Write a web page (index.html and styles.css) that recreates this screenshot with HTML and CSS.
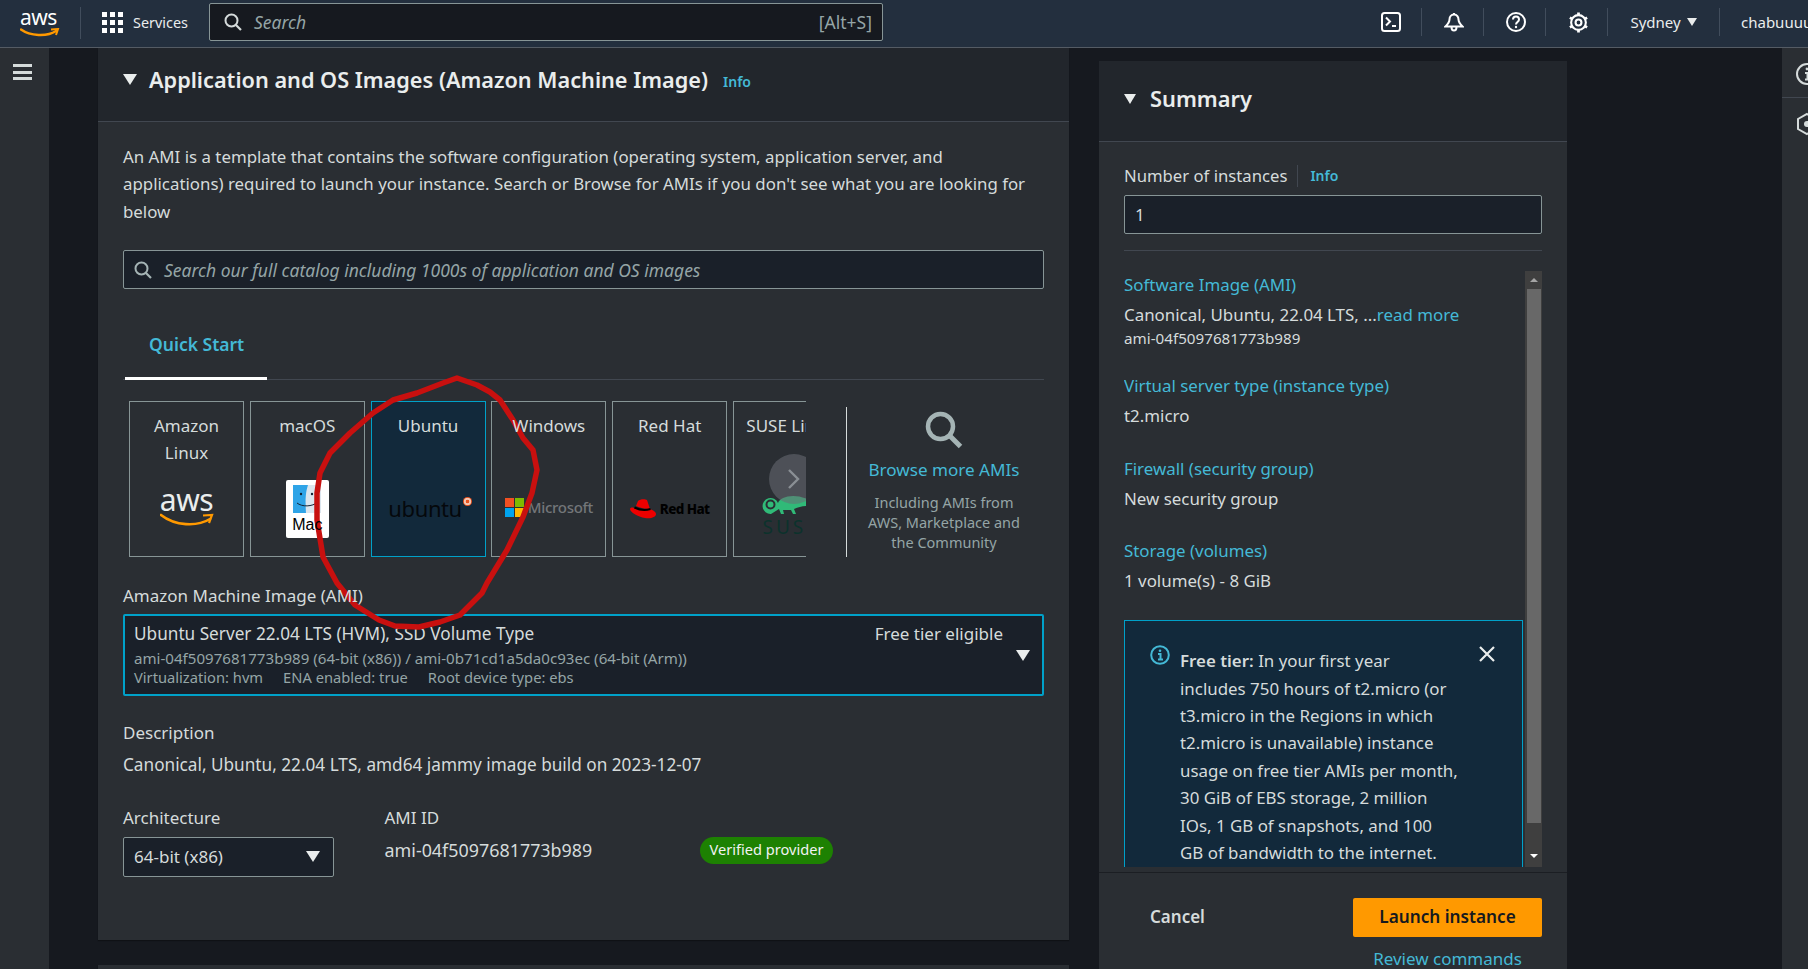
FILE: index.html
```html
<!DOCTYPE html>
<html lang="en">
<head>
    <meta charset="UTF-8">
    <title>Launch an instance</title>
    <link rel="stylesheet" href="styles.css">
</head>
<body>
    <header class="topbar">
        <div class="aws-logo">
            <span class="aws-word">aws</span>
            <svg class="aws-smile" viewBox="0 0 40 10"><path d="M1 1.500C10 8 27 9 36 3" fill="none" stroke="#f90" stroke-width="2.400" stroke-linecap="round"/><path d="M31 1.500l7-.5-2 6" fill="none" stroke="#f90" stroke-width="2"/></svg>
        </div>
        <div class="services">
            <span class="grid-icon"><i></i><i></i><i></i><i></i><i></i><i></i><i></i><i></i><i></i></span>
            <span>Services</span>
        </div>
        <div class="top-search">
            <svg class="search-icon" viewBox="0 0 18 18"><circle cx="7.500" cy="7.500" r="6" fill="none" stroke="#d5dbdb" stroke-width="2"/><path d="M12 12l5 5" stroke="#d5dbdb" stroke-width="2.200"/></svg>
            <span class="top-search-text">Search</span>
            <span class="shortcut">[Alt+S]</span>
        </div>
        <nav class="top-actions">
            <div class="top-cell">
                <svg width="20" height="20" viewBox="0 0 20 20"><rect x="1" y="1" width="18" height="18" rx="2.500" fill="none" stroke="#fff" stroke-width="2"/><path d="M5 5.500l4 4-4 4M11 14h4" fill="none" stroke="#fff" stroke-width="2"/></svg>
            </div>
            <div class="top-cell">
                <svg width="20" height="20" viewBox="0 0 20 20"><path d="M10 2.500c-3 0-4.500 2.400-4.500 5 0 3-1.500 4.500-4 7h17c-2.500-2.500-4-4-4-7 0-2.600-1.500-5-4.500-5zM10 1v2M7.500 15c0 2 1 3.500 2.500 3.500s2.500-1.500 2.500-3.500" fill="none" stroke="#fff" stroke-width="2"/></svg>
            </div>
            <div class="top-cell">
                <svg width="20" height="20" viewBox="0 0 20 20"><circle cx="10" cy="10" r="9" fill="none" stroke="#fff" stroke-width="2"/><path d="M7 7.500c0-4 6-4 6 0 0 2.500-3 2.500-3 5" fill="none" stroke="#fff" stroke-width="2"/><circle cx="10" cy="15" r="1.200" fill="#fff"/></svg>
            </div>
            <div class="top-cell gear-cell">
                <svg width="21" height="21" viewBox="0 0 20 20"><circle cx="10" cy="10" r="2.800" fill="none" stroke="#fff" stroke-width="2"/><circle cx="10" cy="10" r="7" fill="none" stroke="#fff" stroke-width="2"/><path d="M10 0.500v3M10 16.500v3M1.800 5.300l2.600 1.500M15.600 13.200l2.600 1.500M1.800 14.700l2.600-1.500M15.600 6.800l2.600-1.500" stroke="#fff" stroke-width="2.600"/></svg>
            </div>
            <div class="top-cell region">Sydney <span class="caret caret-small"></span></div>
            <div class="top-cell account">chabuuuu</div>
        </nav>
    </header>

    <div class="page">
        <aside class="left-rail">
            <span class="hamburger"><i></i><i></i><i></i></span>
        </aside>

        <main class="main-col">
            <section class="panel ami-panel">
                <div class="panel-head">
                    <span class="caret"></span>
                    <h2>Application and OS Images (Amazon Machine Image)</h2>
                    <a class="info-link">Info</a>
                </div>
                <div class="panel-body">
                    <p class="intro">An AMI is a template that contains the software configuration (operating system, application server, and applications) required to launch your instance. Search or Browse for AMIs if you don't see what you are looking for below</p>

                    <div class="ami-search">
                        <svg class="search-icon" viewBox="0 0 18 18"><circle cx="7.500" cy="7.500" r="6" fill="none" stroke="#a5b4b5" stroke-width="2"/><path d="M12 12l5 5" stroke="#a5b4b5" stroke-width="2.200"/></svg>
                        <span>Search our full catalog including 1000s of application and OS images</span>
                    </div>

                    <div class="tabs">
                        <a class="tab">Quick Start</a>
                    </div>

                    <div class="picker">
                        <div class="carousel">
                            <div class="tile">
                                <div class="tile-name">Amazon Linux</div>
                                <div class="tile-logo">
                                    <div class="logo-aws">
                                        <span>aws</span>
                                        <svg viewBox="0 0 54 14" width="54" height="14"><path d="M1 2c14 11 36 12 49 4" fill="none" stroke="#f90" stroke-width="2.600" stroke-linecap="round"/><path d="M43 2.500l9-.5-3 8" fill="none" stroke="#f90" stroke-width="2.200"/></svg>
                                    </div>
                                </div>
                            </div>
                            <div class="tile">
                                <div class="tile-name">macOS</div>
                                <div class="tile-logo">
                                    <div class="logo-mac">
                                        <svg width="28" height="28" viewBox="0 0 28 28"><rect width="28" height="28" fill="#dce6ee"/><path d="M0 0h15c-2 6-3 13-2 28H0z" fill="#2fa4e7"/><circle cx="8" cy="9" r="1.200" fill="#123"/><circle cx="19" cy="9" r="1.200" fill="#123"/><path d="M4 18c5 4 15 4 21-1" fill="none" stroke="#123" stroke-width="1"/></svg>
                                        <span class="over-marker">Mac</span>
                                    </div>
                                </div>
                            </div>
                            <div class="tile tile-selected">
                                <div class="tile-name">Ubuntu</div>
                                <div class="tile-logo">
                                    <div class="logo-ubuntu">
                                        <span>ubuntu</span><i></i>
                                    </div>
                                </div>
                            </div>
                            <div class="tile">
                                <div class="tile-name"><span class="over-marker">Windows</span></div>
                                <div class="tile-logo">
                                    <div class="logo-ms">
                                        <span class="ms-squares"><i></i><i></i><i></i><i></i></span>
                                        <span>Microsoft</span>
                                    </div>
                                </div>
                            </div>
                            <div class="tile">
                                <div class="tile-name">Red Hat</div>
                                <div class="tile-logo">
                                    <div class="logo-redhat">
                                        <svg width="26" height="20" viewBox="0 0 26 20"><path d="M8 2c2-2 7-2 9-1l3 9c3 1 6 3 6 5 0 3-5 5-11 4C8 18 0 13 0 10c0-1 2-2 4-1 5 2 11 3 16 1-5 0-10-1-14-3z" fill="#e00"/><path d="M4.500 8.500c5 2.500 11 3 16 1.500" fill="none" stroke="#000" stroke-width="2"/></svg>
                                        <span>Red Hat</span>
                                    </div>
                                </div>
                            </div>
                            <div class="tile tile-clipped">
                                <div class="tile-name">SUSE Linux</div>
                                <div class="tile-logo">
                                    <div class="logo-suse">
                                        <svg width="76" height="23" viewBox="0 0 76 23"><path d="M9 21a8 8 0 1 1 7-11c2-6 15-10 29-4l4 4-3 3c-6 0-9 1-14 3l2 5h-3l-2-4-8 0 1 4h-3l-2-5" fill="#30ba78"/><circle cx="8.500" cy="11.500" r="4" fill="none" stroke="#2a2e33" stroke-width="2"/></svg>
                                        <span>SUSE</span>
                                    </div>
                                </div>
                            </div>
                            <button class="carousel-next" type="button">
                                <svg width="14" height="22" viewBox="0 0 14 22"><path d="M2 2l9 9-9 9" fill="none" stroke="#8a8f94" stroke-width="2.400"/></svg>
                            </button>
                        </div>
                        <div class="browse">
                            <svg width="38" height="38" viewBox="0 0 38 38"><circle cx="15.500" cy="15.500" r="12.500" fill="none" stroke="#a5b4b5" stroke-width="4.500"/><path d="M24.500 24.500l11 11" stroke="#a5b4b5" stroke-width="5"/></svg>
                            <a class="browse-link">Browse more AMIs</a>
                            <p>Including AMIs from AWS, Marketplace and the Community</p>
                        </div>
                    </div>

                    <div class="field-label ami-label"><span class="over-marker">Amazon Machine Image (AMI)</span></div>
                    <div class="ami-select">
                        <div class="ami-select-top">
                            <span>Ubuntu Server 22.04 LTS (HVM), SSD Volume Type</span>
                            <span class="free-tier">Free tier eligible</span>
                        </div>
                        <div class="ami-meta">ami-04f5097681773b989 (64-bit (x86)) / ami-0b71cd1a5da0c93ec (64-bit (Arm))</div>
                        <div class="ami-meta ami-tags">
                            <span>Virtualization: hvm</span>
                            <span>ENA enabled: true</span>
                            <span>Root device type: ebs</span>
                        </div>
                        <span class="caret select-caret"></span>
                    </div>

                    <div class="field-label desc-label">Description</div>
                    <div class="desc-value">Canonical, Ubuntu, 22.04 LTS, amd64 jammy image build on 2023-12-07</div>

                    <div class="arch-row">
                        <div class="arch-col">
                            <div class="field-label">Architecture</div>
                            <div class="arch-select">64-bit (x86) <span class="caret"></span></div>
                        </div>
                        <div class="id-col">
                            <div class="field-label">AMI ID</div>
                            <div class="id-value">ami-04f5097681773b989</div>
                        </div>
                        <span class="badge">Verified provider</span>
                    </div>
                </div>
            </section>
            <section class="panel next-panel"></section>
        </main>

        <aside class="summary">
            <div class="summary-head">
                <span class="caret"></span>
                <h2>Summary</h2>
            </div>
            <div class="summary-body">
                <div class="count-label">
                    <span>Number of instances</span>
                    <a class="info-link">Info</a>
                </div>
                <div class="count-input">1</div>
                <div class="summary-scroll">
                    <div class="summary-list">
                        <a class="sum-link">Software Image (AMI)</a>
                        <div class="sum-value">Canonical, Ubuntu, 22.04 LTS, ...<a class="read-more">read more</a></div>
                        <div class="sum-small">ami-04f5097681773b989</div>
                        <a class="sum-link">Virtual server type (instance type)</a>
                        <div class="sum-value">t2.micro</div>
                        <a class="sum-link">Firewall (security group)</a>
                        <div class="sum-value">New security group</div>
                        <a class="sum-link">Storage (volumes)</a>
                        <div class="sum-value">1 volume(s) - 8 GiB</div>
                        <div class="free-alert">
                            <svg class="alert-icon" width="20" height="20" viewBox="0 0 20 20"><circle cx="10" cy="10" r="8.800" fill="none" stroke="#44b9d6" stroke-width="2"/><path d="M8 9h2.500v5M8 14.500h5" fill="none" stroke="#44b9d6" stroke-width="2"/><circle cx="10" cy="5.800" r="1.300" fill="#44b9d6"/></svg>
                            <p><b>Free tier:</b> In your first year includes 750 hours of t2.micro (or t3.micro in the Regions in which t2.micro is unavailable) instance usage on free tier AMIs per month, 30 GiB of EBS storage, 2 million IOs, 1 GB of snapshots, and 100 GB of bandwidth to the internet.</p>
                            <svg class="alert-close" width="18" height="18" viewBox="0 0 18 18"><path d="M2 2l14 14M16 2L2 16" stroke="#eaeded" stroke-width="2.200"/></svg>
                        </div>
                    </div>
                    <div class="scrollbar">
                        <span class="arrow-up"></span>
                        <span class="thumb"></span>
                        <span class="arrow-down"></span>
                    </div>
                </div>
            </div>
            <div class="summary-foot">
                <div class="foot-buttons">
                    <a class="cancel">Cancel</a>
                    <button class="launch" type="button">Launch instance</button>
                </div>
                <a class="review">Review commands</a>
            </div>
        </aside>

        <aside class="right-rail">
            <div class="rail-cell">
                <svg width="24" height="24" viewBox="0 0 24 24"><circle cx="12" cy="12" r="10" fill="none" stroke="#d5dbdb" stroke-width="2"/><path d="M10 11h2.500v6M10 17.500h5" fill="none" stroke="#d5dbdb" stroke-width="2"/><circle cx="12" cy="7" r="1.400" fill="#d5dbdb"/></svg>
            </div>
            <div class="rail-cell">
                <svg width="24" height="24" viewBox="0 0 24 24"><path d="M12 2l9 5v10l-9 5-9-5V7z" fill="none" stroke="#d5dbdb" stroke-width="2"/><circle cx="12" cy="12" r="3" fill="#d5dbdb"/></svg>
            </div>
        </aside>
    </div>

    <!-- hand drawn marker ring around the Ubuntu tile -->
    <svg class="marker" width="1808" height="969" viewBox="0 0 1808 969">
        <path d="M457 378L477 385 490 392 500 400 513 420 523 438 533 450 537 470 532 493 523 517 507 550 487 583 482 593 460 615 440 622 419 627 395 626 379 620 355 605 337 583 323 557 317 520 317 493 320 473 330 453 350 433 373 413 393 400 417 393 443 383Z" fill="none" stroke="#c8100f" stroke-width="5.500" stroke-linejoin="round"/>
    </svg>
</body>
</html>
```

FILE: styles.css
```css
* {
    margin: 0;
    padding: 0;
    box-sizing: border-box;
}

html, body {
    height: 100%;
    overflow: hidden;
}

body {
    background: #16191f;
    color: #d5dbdb;
    font-family: "Noto Sans", "Open Sans", sans-serif;
    font-size: 17px;
}

i {
    display: block;
}

.caret {
    display: inline-block;
    width: 0;
    height: 0;
    border-left: 7px solid transparent;
    border-right: 7px solid transparent;
    border-top: 11px solid #eaeded;
}

.caret-small {
    border-left-width: 5px;
    border-right-width: 5px;
    border-top-width: 8px;
    margin-left: 6px;
}

/* text that the marker ring passes behind */
.over-marker {
    position: relative;
    z-index: 1;
}

/* top bar */
.topbar {
    height: 48px;
    background: #232f3e;
    border-bottom: 1px solid #545b64;
    display: flex;
    align-items: center;
    overflow: hidden;
    color: #eaeded;
}

.aws-logo {
    width: 81px;
    height: 32px;
    padding-left: 20px;
    border-right: 1px solid #414d5c;
    margin-top: -2px;
}

.aws-word {
    display: block;
    font-size: 21px;
    line-height: 20px;
    color: #fff;
    letter-spacing: -0.5px;
}

.aws-smile {
    display: block;
    width: 40px;
    height: 10px;
    margin-top: 1px;
}

.services {
    display: flex;
    align-items: center;
    gap: 10px;
    margin-left: 21px;
    margin-top: -3px;
    font-size: 14.4px;
    color: #eaeded;
}

.grid-icon {
    display: grid;
    grid-template-columns: repeat(3, 5px);
    grid-auto-rows: 5px;
    gap: 3px;
}

.grid-icon i {
    background: #fff;
}

.top-search {
    width: 674px;
    height: 38px;
    margin-left: 21px;
    margin-top: -3px;
    background: #16191f;
    border: 1px solid #879596;
    border-radius: 2px;
    display: flex;
    align-items: center;
    padding: 0 10px 0 14px;
    font-size: 17.5px;
}

.search-icon {
    width: 18px;
    height: 18px;
    flex-shrink: 0;
}

.top-search-text {
    margin-left: 12px;
    font-style: italic;
    color: #95a5a6;
}

.shortcut {
    margin-left: auto;
    color: #95a5a6;
}

.top-actions {
    margin-left: auto;
    margin-top: -3px;
    width: 448px;
    display: flex;
    flex-shrink: 0;
    overflow: hidden;
}

.top-cell {
    width: 62px;
    height: 28px;
    display: flex;
    align-items: center;
    justify-content: center;
    border-right: 1px solid #414d5c;
    flex-shrink: 0;
    font-size: 15px;
}

.top-cell + .top-cell {
    padding-left: 2px;
}

.top-cell.gear-cell {
    padding-left: 4px;
}

.top-cell.region {
    width: 112px;
    padding-left: 0;
}

.top-cell.account {
    width: 88px;
    border-right: none;
    justify-content: flex-start;
    padding-left: 21px;
    white-space: nowrap;
}

/* page columns */
.page {
    display: flex;
    height: 921px;
    overflow: hidden;
}

.left-rail {
    width: 49px;
    background: #2a2e33;
    flex-shrink: 0;
    padding: 16px 0 0 13px;
}

.hamburger {
    display: flex;
    flex-direction: column;
    gap: 3.5px;
    width: 19px;
}

.hamburger i {
    height: 3px;
    background: #d5dbdb;
}

.main-col {
    width: 971px;
    margin-left: 49px;
    flex-shrink: 0;
}

.panel {
    background: #2a2e33;
    box-shadow: 0 1px 1px rgba(0, 0, 0, 0.3);
}

.panel-head {
    height: 74px;
    background: #22262c;
    border-bottom: 1px solid #414750;
    display: flex;
    align-items: center;
    padding: 0 0 10px 25px;
}

.panel-head h2 {
    font-size: 21.7px;
    font-weight: 600;
    color: #eaeded;
    margin-left: 12px;
}

.info-link {
    color: #44b9d6;
    font-size: 14px;
    font-weight: 600;
}

.panel-head .info-link {
    margin-left: 15px;
    margin-top: 4px;
}

.panel-body {
    height: 818px;
    padding: 21px 25px 0;
}

.intro {
    font-size: 16.85px;
    line-height: 27.4px;
    height: 82px;
}

.ami-search {
    height: 39px;
    margin-top: 25px;
    background: #1a2029;
    border: 1px solid #879596;
    border-radius: 2px;
    display: flex;
    align-items: center;
    padding-left: 10px;
    font-size: 17.5px;
    font-style: italic;
    color: #95a5a6;
}

.ami-search span {
    margin-left: 12px;
}

.tabs {
    height: 91px;
    border-bottom: 1px solid #414750;
    display: flex;
    align-items: flex-end;
}

.tab {
    width: 142px;
    height: 62px;
    margin-left: 2px;
    margin-bottom: -1px;
    border-bottom: 3px solid #fff;
    color: #44b9d6;
    font-size: 17.5px;
    font-weight: 600;
    padding: 15px 0 0 24px;
    line-height: 22px;
}

/* ami tiles */
.picker {
    display: flex;
    margin: 21px 0 0 6px;
    gap: 40px;
}

.carousel {
    width: 677px;
    display: flex;
    gap: 5.8px;
    overflow: hidden;
    position: relative;
}

.tile {
    width: 115px;
    height: 156px;
    flex-shrink: 0;
    border: 1px solid #879596;
    display: flex;
    flex-direction: column;
    padding-top: 10px;
}

.tile-selected {
    background: #12293b;
    border-color: #00a1c9;
}

.tile-name {
    height: 55px;
    padding: 0 12px;
    line-height: 27px;
    text-align: center;
}

.tile-clipped .tile-name {
    padding: 0;
    white-space: nowrap;
}

.tile-logo {
    flex: 1;
    display: flex;
    align-items: center;
    justify-content: center;
    padding-bottom: 6px;
}

.carousel-next {
    position: absolute;
    left: 640px;
    top: 53px;
    width: 50px;
    height: 50px;
    border: none;
    border-radius: 50%;
    background: rgba(105, 110, 116, 0.55);
    display: flex;
    align-items: center;
    justify-content: center;
}

.logo-aws {
    display: flex;
    flex-direction: column;
    align-items: center;
    color: #eaeded;
    margin-top: -3px;
}

.logo-aws span {
    font-size: 30px;
    line-height: 26px;
    letter-spacing: -0.5px;
}

.logo-mac {
    width: 43px;
    height: 58px;
    background: #fff;
    border-radius: 2px;
    display: flex;
    flex-direction: column;
    align-items: center;
    padding-top: 5px;
    color: #000;
    font-family: "Liberation Sans", sans-serif;
    font-size: 16px;
    line-height: 20px;
}

.logo-mac span {
    margin-top: 2px;
}

.logo-ubuntu {
    display: flex;
    color: #05080c;
    font-size: 22px;
    line-height: 26px;
    letter-spacing: -0.4px;
    margin: -2px 0 0 4px;
}

.logo-ubuntu i {
    width: 9px;
    height: 9px;
    margin: 2px 0 0 1px;
    border-radius: 50%;
    background: radial-gradient(circle, #e95420 28%, #f6c6b0 32%, #f6c6b0 55%, #e95420 60%);
}

.logo-ms {
    display: flex;
    align-items: center;
    gap: 4px;
    margin-top: -3px;
    color: #737679;
    font-size: 15px;
    font-weight: 500;
    letter-spacing: -0.3px;
}

.ms-squares {
    display: grid;
    grid-template-columns: 9px 9px;
    grid-auto-rows: 9px;
    gap: 1px;
}

.ms-squares i:nth-child(1) { background: #f25022; }
.ms-squares i:nth-child(2) { background: #7fba00; }
.ms-squares i:nth-child(3) { background: #00a4ef; }
.ms-squares i:nth-child(4) { background: #ffb900; }

.logo-redhat {
    display: flex;
    align-items: center;
    gap: 4px;
    color: #000;
    font-size: 13.5px;
    font-weight: 800;
    letter-spacing: -0.6px;
    white-space: nowrap;
}

.logo-suse {
    width: 82px;
    padding-left: 2px;
    margin: 13px 0 0 22px;
    color: #0c322c;
    font-size: 19px;
    letter-spacing: 3px;
    line-height: 22px;
}

.logo-suse svg {
    display: block;
}

.browse {
    width: 198px;
    height: 150px;
    margin-top: 6px;
    border-left: 1px solid #d5dbdb;
    display: flex;
    flex-direction: column;
    align-items: center;
    text-align: center;
    padding: 4px 3px 0 0;
}

.browse-link {
    color: #44b9d6;
    font-size: 17.1px;
    margin-top: 9px;
    line-height: 24px;
}

.browse p {
    margin-top: 10px;
    font-size: 14.5px;
    line-height: 20px;
    color: #95a5a6;
    width: 164px;
}

/* fields */
.field-label {
    line-height: 20px;
}

.ami-label {
    margin-top: 29px;
}

.ami-select {
    position: relative;
    height: 82px;
    margin-top: 8px;
    background: #1a2029;
    border: 2px solid #00a1c9;
    border-radius: 2px;
    padding: 7px 39px 0 9px;
    font-size: 17.2px;
}

.ami-select-top {
    display: flex;
    justify-content: space-between;
    line-height: 22px;
}

.free-tier {
    font-size: 17px;
}

.ami-meta {
    font-size: 15.1px;
    line-height: 20px;
    color: #95a5a6;
}

.ami-select-top + .ami-meta {
    margin-top: 3px;
}

.ami-tags {
    display: flex;
    gap: 20px;
    margin-top: -1px;
    font-size: 14.7px;
}

.select-caret {
    position: absolute;
    right: 12px;
    top: 34px;
}

.desc-label {
    margin-top: 27px;
}

.desc-value {
    margin-top: 11px;
    font-size: 17.2px;
    line-height: 22px;
}

.arch-row {
    display: flex;
    margin-top: 32px;
}

.arch-col {
    width: 261.5px;
}

.arch-select {
    width: 211px;
    height: 40px;
    margin-top: 9px;
    background: #1a2029;
    border: 1px solid #879596;
    border-radius: 2px;
    display: flex;
    align-items: center;
    justify-content: space-between;
    padding: 0 13px 2px 10px;
}

.id-col {
    width: 315.5px;
}

.id-value {
    margin-top: 11px;
    font-size: 17.9px;
    line-height: 22px;
}

.badge {
    align-self: flex-start;
    margin-top: 29px;
    width: 133px;
    height: 27px;
    border-radius: 14px;
    background: #1d8102;
    color: #f2f3f3;
    font-size: 14.6px;
    line-height: 25px;
    text-align: center;
}

.next-panel {
    height: 60px;
    margin-top: 25px;
}

/* summary */
.summary {
    width: 468px;
    height: 908px;
    margin: 13px 0 0 30px;
    flex-shrink: 0;
    background: #2a2e33;
    overflow: hidden;
}

.summary-head {
    height: 81px;
    background: #22262c;
    border-bottom: 1px solid #414750;
    display: flex;
    align-items: center;
    padding: 0 0 5px 25px;
}

.summary-head .caret {
    border-left-width: 6px;
    border-right-width: 6px;
    border-top-width: 10px;
}

.summary-head h2 {
    margin-left: 14px;
    font-size: 21.8px;
    font-weight: 600;
    color: #eaeded;
}

.summary-body {
    padding: 23px 25px 5px;
    font-size: 16.9px;
}

.count-label {
    display: flex;
    align-items: center;
    line-height: 22px;
    font-size: 16.7px;
}

.count-label .info-link {
    margin-left: 10px;
    padding-left: 12px;
    border-left: 1px solid #414750;
    font-size: 14px;
}

.count-input {
    height: 39px;
    margin-top: 8px;
    background: #1a2029;
    border: 1px solid #879596;
    border-radius: 2px;
    padding-left: 10px;
    line-height: 37px;
}

.summary-scroll {
    height: 617px;
    margin-top: 16px;
    padding-top: 20px;
    border-top: 1px solid #414750;
    display: flex;
}

.summary-list {
    width: 399px;
    overflow: hidden;
}

.sum-link {
    display: block;
    color: #44b9d6;
    line-height: 22px;
    margin-top: 30.6px;
}

.sum-link:first-child {
    margin-top: 3px;
}

.sum-value {
    margin-top: 8px;
    line-height: 22px;
}

.read-more {
    color: #44b9d6;
}

.sum-small {
    font-size: 15.2px;
    line-height: 20px;
    margin-top: 2px;
    margin-bottom: -3.6px;
}

.free-alert {
    position: relative;
    margin-top: 28px;
    height: 300px;
    background: #12293b;
    border: 1px solid #00a1c9;
    padding: 26px 64px 0 55px;
}

.free-alert p {
    line-height: 27.4px;
}

.free-alert b {
    font-weight: 600;
}

.alert-icon {
    position: absolute;
    left: 25px;
    top: 24px;
}

.alert-close {
    position: absolute;
    left: 353px;
    top: 24px;
}

.scrollbar {
    width: 17px;
    height: 596px;
    margin-left: 2px;
    background: #3f3f3f;
    display: flex;
    flex-direction: column;
    align-items: center;
}

.arrow-up, .arrow-down {
    flex-shrink: 0;
    width: 0;
    height: 0;
    border-left: 4px solid transparent;
    border-right: 4px solid transparent;
}

.arrow-up {
    margin-top: 7px;
    border-bottom: 4px solid #a5a5a5;
}

.arrow-down {
    margin-top: 31px;
    border-top: 4px solid #fff;
}

.thumb {
    width: 14px;
    height: 534px;
    margin-top: 7px;
    background: #686868;
}

.summary-foot {
    border-top: 1px solid #1b1e23;
    padding: 25px 25px 0 51px;
}

.foot-buttons {
    display: flex;
    align-items: center;
    justify-content: space-between;
}

.cancel {
    font-weight: 600;
    margin-top: -3px;
}

.launch {
    width: 189px;
    height: 39px;
    border: none;
    border-radius: 2px;
    background: #f90;
    color: #16191f;
    font-family: inherit;
    font-size: 17.2px;
    font-weight: 600;
    padding-bottom: 3px;
}

.review {
    display: block;
    width: 189px;
    margin-left: auto;
    margin-top: 10px;
    text-align: center;
    color: #44b9d6;
    white-space: nowrap;
}

/* right rail */
.right-rail {
    width: 26px;
    margin-left: auto;
    background: #2a2e33;
    overflow: hidden;
    flex-shrink: 0;
}

.rail-cell {
    height: 50px;
    padding: 14px 0 0 13px;
    border-bottom: 1px solid #414750;
}

.rail-cell + .rail-cell {
    border-bottom: none;
}

.marker {
    position: absolute;
    left: 0;
    top: 0;
    pointer-events: none;
}
```
